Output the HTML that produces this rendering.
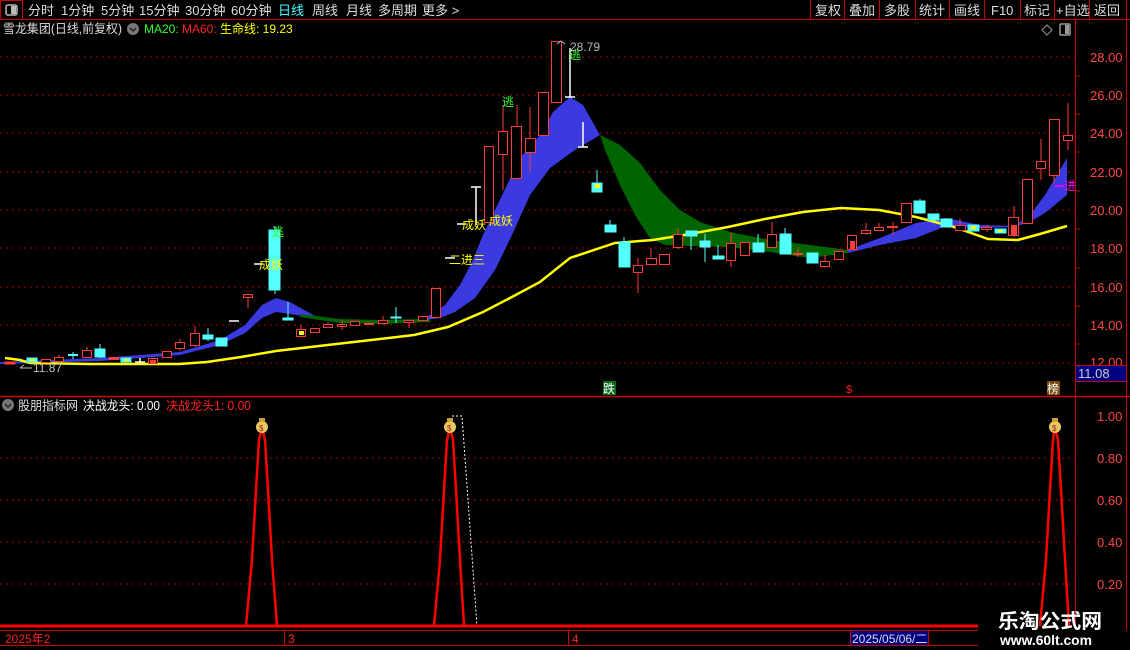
<!DOCTYPE html>
<html><head><meta charset="utf-8"><style>
body{margin:0;background:#000;width:1130px;height:650px;overflow:hidden;font-family:"Liberation Sans","Noto Sans CJK SC",sans-serif;}
svg{position:absolute;left:0;top:0}
text{font-family:"Liberation Sans","Noto Sans CJK SC",sans-serif;}
</style></head><body>
<svg width="1130" height="650" viewBox="0 0 1130 650">
<!-- top bar -->
<rect x="0.5" y="0.5" width="22" height="19" fill="none" stroke="#c00"/>
<rect x="6" y="5" width="11" height="10" rx="2" fill="none" stroke="#bbb" stroke-width="1.5"/><rect x="11" y="6" width="5" height="8" fill="#bbb"/>
<line x1="0" y1="19.5" x2="1130" y2="19.5" stroke="#c00"/>
<g font-size="13" fill="#ddd">
<text x="28" y="15">分时</text><text x="61" y="15">1分钟</text><text x="101" y="15">5分钟</text><text x="139" y="15">15分钟</text><text x="185" y="15">30分钟</text><text x="231" y="15">60分钟</text>
<text x="278" y="15" fill="#4ff">日线</text><text x="312" y="15">周线</text><text x="346" y="15">月线</text><text x="378" y="15">多周期</text><text x="422" y="15">更多 &gt;</text>
<text x="815" y="15">复权</text><text x="849" y="15">叠加</text><text x="884" y="15">多股</text><text x="919" y="15">统计</text><text x="954" y="15">画线</text><text x="991" y="15">F10</text><text x="1024" y="15">标记</text><text x="1056" y="15">+自选</text><text x="1094" y="15">返回</text>
</g>
<g stroke="#c00"><line x1="810.5" y1="0" x2="810.5" y2="19"/><line x1="844.5" y1="0" x2="844.5" y2="19"/><line x1="879.5" y1="0" x2="879.5" y2="19"/><line x1="915.5" y1="0" x2="915.5" y2="19"/><line x1="949.5" y1="0" x2="949.5" y2="19"/><line x1="984.5" y1="0" x2="984.5" y2="19"/><line x1="1020.5" y1="0" x2="1020.5" y2="19"/><line x1="1054.5" y1="0" x2="1054.5" y2="19"/><line x1="1089.5" y1="0" x2="1089.5" y2="19"/><line x1="1126.5" y1="0" x2="1126.5" y2="19"/></g>
<!-- info line -->
<text x="3" y="33" font-size="12.5" fill="#ddd" textLength="119" lengthAdjust="spacingAndGlyphs">雪龙集团(日线,前复权)</text>
<circle cx="133" cy="29" r="6" fill="#777"/><path d="M130 28 l3 3 l3 -3" stroke="#222" stroke-width="1.5" fill="none"/>
<text x="144" y="33" font-size="12" fill="#3f3">MA20:</text><text x="182" y="33" font-size="12" fill="#f22">MA60:</text><text x="220" y="33" font-size="12" fill="#ff0">生命线: 19.23</text>
<path d="M1047 25 l5 5 l-5 5 l-5 -5z" fill="none" stroke="#999"/>
<rect x="1060" y="24" width="10" height="11" rx="1" fill="none" stroke="#999" stroke-width="1.5"/><rect x="1065" y="25" width="4" height="9" fill="#999"/>
<!-- axes -->
<line x1="1075.5" y1="20" x2="1075.5" y2="630" stroke="#c00"/>
<line x1="1126.5" y1="20" x2="1126.5" y2="630" stroke="#c00"/>
<g stroke="#a00" stroke-dasharray="2,4">
<line x1="0" y1="57" x2="1075" y2="57"/><line x1="0" y1="95" x2="1075" y2="95"/><line x1="0" y1="133" x2="1075" y2="133"/><line x1="0" y1="172" x2="1075" y2="172"/><line x1="0" y1="210" x2="1075" y2="210"/><line x1="0" y1="248" x2="1075" y2="248"/><line x1="0" y1="287" x2="1075" y2="287"/><line x1="0" y1="325" x2="1075" y2="325"/><line x1="0" y1="363" x2="1075" y2="363"/>
<line x1="0" y1="458" x2="1075" y2="458"/><line x1="0" y1="500" x2="1075" y2="500"/><line x1="0" y1="542" x2="1075" y2="542"/><line x1="0" y1="584" x2="1075" y2="584"/>
</g>
<g font-size="13" fill="#f44">
<text x="1090" y="62">28.00</text><text x="1090" y="100">26.00</text><text x="1090" y="138">24.00</text><text x="1090" y="177">22.00</text><text x="1090" y="215">20.00</text><text x="1090" y="253">18.00</text><text x="1090" y="292">16.00</text><text x="1090" y="330">14.00</text><text x="1090" y="367">12.00</text>
<text x="1097" y="421">1.00</text><text x="1097" y="463">0.80</text><text x="1097" y="505">0.60</text><text x="1097" y="547">0.40</text><text x="1097" y="589">0.20</text>
</g>
<g stroke="#c00"><line x1="1076" y1="76" x2="1080" y2="76"/><line x1="1076" y1="114" x2="1080" y2="114"/><line x1="1076" y1="152" x2="1080" y2="152"/><line x1="1076" y1="191" x2="1080" y2="191"/><line x1="1076" y1="229" x2="1080" y2="229"/><line x1="1076" y1="268" x2="1080" y2="268"/><line x1="1076" y1="306" x2="1080" y2="306"/><line x1="1076" y1="344" x2="1080" y2="344"/></g>
<rect x="1075.5" y="365.5" width="51" height="16" fill="#000080" stroke="#c00"/>
<text x="1078" y="378" font-size="13" fill="#ccc">11.08</text>
<!-- bands -->
<polygon fill="#3a3ae0" points="0,362 100,358 180,352 220,340 245,325 262,305 276,298 290,302 315,316 315,318 290,314 276,312 262,318 245,333 220,345 180,355 100,361 0,364"/>
<polygon fill="#006400" points="300,314 340,319 380,320 420,319 430,318 430,322 380,324 340,323 300,317"/>
<polygon fill="#3a3ae0" points="425,318 445,305 460,285 472,262 483,235 507,185 520,158 540,135 553,112 570,97 583,105 600,135 575,150 550,168 530,195 512,235 495,270 475,298 455,312 440,318 425,320"/>
<polygon fill="#006400" points="600,135 620,145 640,163 660,190 680,210 700,222 730,232 770,240 810,245 848,250 848,253 810,258 770,252 730,247 690,246 665,245 650,238 635,215 620,185 605,150"/>
<polygon fill="#3a3ae0" points="848,250 880,238 916,223 946,218 980,225 1014,226 1030,215 1045,195 1067,158 1067,195 1045,213 1030,222 1014,227 980,228 946,226 916,238 880,245 848,253"/>
<polyline fill="none" stroke="#ff0" stroke-width="2.5" points="5,358 20,360 30,363 90,364 179,364 207,362 241,357 276,351 345,343 414,335 448,327 483,312 510,298 540,282 570,258 615,243 653,240 690,234 728,227 765,219 803,212 841,208 879,210 916,217 954,227 988,239 1018,240 1040,234 1067,226"/>
<!-- candles -->
<g stroke="#ff3c3c" fill="#000">
<rect x="5" y="362" width="10" height="2" fill="#ff3c3c"/>
<rect x="41.5" y="359.5" width="9" height="3"/>
<line x1="59" y1="355" x2="59" y2="363"/><rect x="54.5" y="357.5" width="9" height="4"/>
<line x1="87" y1="347" x2="87" y2="358"/><rect x="82.5" y="350.5" width="9" height="7"/>
<rect x="109.5" y="357.5" width="9" height="2" fill="#ff3c3c"/>
<rect x="148.5" y="358.5" width="9" height="5"/><rect x="150" y="360" width="6" height="3" fill="#ff3c3c" stroke="none"/>
<rect x="162.5" y="351.5" width="9" height="6"/>
<line x1="180" y1="339" x2="180" y2="351"/><rect x="175.5" y="342.5" width="9" height="6"/>
<line x1="195" y1="326" x2="195" y2="347"/><rect x="190.5" y="333.5" width="9" height="12"/>
<line x1="248" y1="297" x2="248" y2="308"/><rect x="243.5" y="294.5" width="9" height="3"/>
<line x1="301" y1="325" x2="301" y2="337"/><rect x="296.5" y="329.5" width="9" height="7"/><rect x="299" y="331" width="5" height="4" fill="#ff0" stroke="none"/>
<rect x="310.5" y="328.5" width="9" height="4"/>
<line x1="328" y1="322" x2="328" y2="328"/><rect x="323.5" y="324.5" width="9" height="3"/>
<line x1="342" y1="320" x2="342" y2="330"/><rect x="337.5" y="324.5" width="9" height="2"/>
<rect x="350.5" y="321.5" width="9" height="4"/>
<rect x="364.5" y="323.5" width="9" height="1"/>
<line x1="383" y1="316" x2="383" y2="325"/><rect x="378.5" y="320.5" width="9" height="3"/>
<line x1="409" y1="322" x2="409" y2="328"/><rect x="404.5" y="320.5" width="9" height="2"/>
<rect x="418.5" y="316.5" width="9" height="4"/>
<rect x="431.5" y="288.5" width="9" height="29"/>
<rect x="484.5" y="146.5" width="9" height="76"/>
<line x1="503" y1="105" x2="503" y2="190"/><rect x="498.5" y="131.5" width="9" height="23"/>
<line x1="517" y1="105" x2="517" y2="126"/><rect x="511.5" y="126.5" width="10" height="52"/>
<line x1="530" y1="107" x2="530" y2="172"/><rect x="525.5" y="138.5" width="10" height="14"/>
<rect x="538.5" y="92.5" width="10" height="43"/>
<rect x="551.5" y="41.5" width="10" height="61"/>
<line x1="638" y1="258" x2="638" y2="293"/><rect x="633.5" y="265.5" width="9" height="7"/>
<line x1="651" y1="248" x2="651" y2="258"/><rect x="646.5" y="258.5" width="10" height="6"/>
<rect x="659.5" y="254.5" width="10" height="10"/>
<line x1="678" y1="228" x2="678" y2="249"/><rect x="673.5" y="234.5" width="9" height="13"/>
<line x1="731" y1="233" x2="731" y2="267"/><rect x="726.5" y="243.5" width="9" height="17"/>
<rect x="740.5" y="242.5" width="9" height="13"/>
<line x1="772" y1="222" x2="772" y2="234"/><rect x="767.5" y="234.5" width="9" height="13"/>
<line x1="798" y1="247" x2="798" y2="257"/><line x1="793" y1="254" x2="803" y2="254" stroke-width="2"/>
<line x1="825" y1="255" x2="825" y2="268"/><rect x="820.5" y="261.5" width="9" height="5"/>
<rect x="834.5" y="251.5" width="9" height="8"/>
<rect x="847.5" y="235.5" width="9" height="14"/><rect x="850" y="241" width="5" height="8" fill="#ff3c3c" stroke="none"/>
<line x1="866" y1="223" x2="866" y2="235"/><rect x="861.5" y="230.5" width="9" height="3"/>
<line x1="879" y1="223" x2="879" y2="227"/><rect x="874.5" y="227.5" width="9" height="3"/>
<line x1="893" y1="222" x2="893" y2="235"/><line x1="887" y1="227" x2="898" y2="227" stroke-width="2"/>
<rect x="901.5" y="203.5" width="10" height="19"/>
<line x1="960" y1="219" x2="960" y2="225"/><rect x="955.5" y="225.5" width="10" height="5"/>
<line x1="987" y1="225" x2="987" y2="232"/><rect x="981.5" y="227.5" width="10" height="2"/>
<line x1="1014" y1="206" x2="1014" y2="237"/><rect x="1008.5" y="217.5" width="10" height="18"/><rect x="1011" y="225" width="6" height="10" fill="#ff3c3c" stroke="none"/>
<rect x="1022.5" y="179.5" width="10" height="44"/>
<line x1="1041" y1="139" x2="1041" y2="180"/><rect x="1036.5" y="161.5" width="9" height="7"/>
<line x1="1054" y1="175" x2="1054" y2="183"/><rect x="1049.5" y="119.5" width="10" height="56"/>
<line x1="1068" y1="103" x2="1068" y2="150"/><rect x="1063.5" y="135.5" width="9" height="5"/>
</g>
<g fill="#54ffff" stroke="#54ffff">
<rect x="27" y="358" width="10" height="4"/>
<line x1="73" y1="352" x2="73" y2="359"/><line x1="68" y1="355" x2="78" y2="355" stroke-width="2"/>
<line x1="100" y1="344" x2="100" y2="358"/><rect x="95" y="349" width="10" height="8"/>
<rect x="121" y="358" width="10" height="4"/>
<line x1="208" y1="328" x2="208" y2="341"/><rect x="203" y="335" width="10" height="4"/>
<rect x="216" y="338" width="11" height="8"/>
<line x1="275" y1="226" x2="275" y2="294"/><rect x="269" y="230" width="11" height="60"/>
<line x1="288" y1="302" x2="288" y2="320"/><rect x="283" y="318" width="10" height="2"/>
<line x1="396" y1="307" x2="396" y2="323"/><rect x="391" y="317" width="10" height="1"/>
<line x1="597" y1="170" x2="597" y2="192"/><rect x="592" y="183" width="10" height="9"/>
<line x1="610" y1="220" x2="610" y2="232"/><rect x="605" y="225" width="11" height="7"/>
<line x1="624" y1="237" x2="624" y2="267"/><rect x="619" y="242" width="11" height="25"/>
<line x1="691" y1="231" x2="691" y2="250"/><rect x="686" y="231" width="11" height="5"/>
<line x1="705" y1="234" x2="705" y2="262"/><rect x="700" y="241" width="10" height="6"/>
<line x1="718" y1="245" x2="718" y2="259"/><rect x="713" y="256" width="11" height="3"/>
<line x1="758" y1="234" x2="758" y2="252"/><rect x="753" y="243" width="11" height="9"/>
<line x1="785" y1="228" x2="785" y2="254"/><rect x="780" y="234" width="11" height="20"/>
<rect x="807" y="253" width="11" height="10"/>
<line x1="920" y1="199" x2="920" y2="213"/><rect x="914" y="201" width="11" height="12"/>
<rect x="928" y="214" width="11" height="6"/>
<rect x="941" y="219" width="11" height="8"/>
<rect x="968" y="225" width="11" height="6"/>
<rect x="995" y="229" width="11" height="4"/>
</g>
<g fill="#ff0"><rect x="30" y="359" width="5" height="2"/><rect x="124" y="359" width="5" height="2"/><rect x="595" y="184" width="5" height="4"/><rect x="971" y="226" width="5" height="3"/><rect x="998" y="230" width="5" height="2"/></g>
<g stroke="#fff" stroke-width="1.5">
<line x1="135" y1="362" x2="145" y2="362"/><line x1="140" y1="358" x2="140" y2="363"/>
<line x1="229" y1="321" x2="239" y2="321"/>
<line x1="254" y1="264" x2="263" y2="264"/>
<line x1="445" y1="258" x2="455" y2="258"/>
<line x1="457" y1="224" x2="466" y2="224"/>
<line x1="476" y1="187" x2="476" y2="225"/><line x1="471" y1="187" x2="481" y2="187"/>
<line x1="570" y1="48" x2="570" y2="97"/><line x1="565" y1="97" x2="575" y2="97"/>
<line x1="583" y1="122" x2="583" y2="147"/><line x1="578" y1="147" x2="588" y2="147"/>
</g>
<!-- labels -->
<g font-size="12">
<text x="272" y="236" fill="#3f3">逃</text>
<text x="502" y="106" fill="#3f3">逃</text>
<text x="569" y="59" fill="#3f3">逃</text>
<text x="259" y="269" fill="#ff0">成妖</text>
<text x="462" y="229" fill="#ff0">成妖</text><text x="489" y="225" fill="#ff0">成妖</text>
<text x="449" y="264" fill="#ff0">二进三</text>
<text x="570" y="51" fill="#bbb">28.79</text>
<text x="33" y="372" fill="#bbb">11.87</text>
<text x="1064" y="190" fill="#f0f">进</text>
</g>
<line x1="1055" y1="186" x2="1064" y2="186" stroke="#f0f" stroke-width="1.5"/>
<path d="M20 368 h12 M20 368 l4 -3" stroke="#bbb" fill="none"/>
<path d="M557 44 l4 -3 l4 3" stroke="#bbb" fill="none"/>
<rect x="603" y="381" width="13" height="14" fill="#0a6b1a"/><text x="603" y="393" font-size="12" fill="#fff">跌</text>
<text x="846" y="393" font-size="11" fill="#f22">$</text>
<rect x="1047" y="381" width="13" height="14" fill="#7a4a10"/><text x="1047" y="393" font-size="12" fill="#fff">榜</text>
<!-- lower panel -->
<line x1="0" y1="396.5" x2="1130" y2="396.5" stroke="#c00" stroke-width="1.5"/>
<circle cx="8" cy="405" r="6" fill="#777"/><path d="M5 404 l3 3 l3 -3" stroke="#222" stroke-width="1.5" fill="none"/>
<text x="18" y="410" font-size="12.5" fill="#ddd" textLength="60" lengthAdjust="spacingAndGlyphs">股朋指标网</text>
<text x="83" y="410" font-size="12.5" fill="#fff" textLength="77" lengthAdjust="spacingAndGlyphs">决战龙头: 0.00</text>
<text x="166" y="410" font-size="12.5" fill="#f22" textLength="85" lengthAdjust="spacingAndGlyphs">决战龙头1: 0.00</text>
<g fill="none" stroke="#f00" stroke-width="2.5">
<polyline points="246,626 252,560 256,490 259,440 261,432"/><polyline points="263,432 265,440 268,490 272,560 277,626"/>
<polyline points="434,626 440,560 444,490 447,440 449,432"/><polyline points="451,432 453,440 456,490 460,560 464,626"/>
<polyline points="1040,626 1046,560 1050,490 1053,440 1054,432"/><polyline points="1056,432 1058,440 1061,490 1065,560 1069,626"/>
</g>
<polyline points="452,416 462,416 477,626" fill="none" stroke="#fff" stroke-dasharray="2,2"/>
<g>
<circle cx="262" cy="427" r="6" fill="#e8c860"/><rect x="259" y="418" width="6" height="4" fill="#d0a030"/><text x="259" y="431" font-size="8" fill="#a02020">$</text>
<circle cx="450" cy="427" r="6" fill="#e8c860"/><rect x="447" y="418" width="6" height="4" fill="#d0a030"/><text x="447" y="431" font-size="8" fill="#a02020">$</text>
<circle cx="1055" cy="427" r="6" fill="#e8c860"/><rect x="1052" y="418" width="6" height="4" fill="#d0a030"/><text x="1052" y="431" font-size="8" fill="#a02020">$</text>
</g>
<line x1="0" y1="626" x2="978" y2="626" stroke="#f00" stroke-width="3"/>
<line x1="0" y1="630.5" x2="978" y2="630.5" stroke="#c00"/>
<line x1="0" y1="645.5" x2="978" y2="645.5" stroke="#c00"/>
<g stroke="#c00"><line x1="284.5" y1="630" x2="284.5" y2="645"/><line x1="568.5" y1="630" x2="568.5" y2="645"/></g>
<text x="5" y="643" font-size="12" fill="#f22">2025年2</text>
<text x="288" y="643" font-size="12" fill="#f22">3</text>
<text x="572" y="643" font-size="12" fill="#f22">4</text>
<rect x="850.5" y="630.5" width="78" height="15" fill="#000080" stroke="#c00"/>
<text x="852" y="643" font-size="12" fill="#ddd">2025/05/06/二</text>
<text x="998" y="628" font-size="20" font-weight="bold" fill="#fff" font-family="'Noto Sans CJK SC',sans-serif" textLength="104" lengthAdjust="spacingAndGlyphs">乐淘公式网</text>
<text x="1000" y="645" font-size="14" font-weight="bold" fill="#fff" font-family="'Liberation Serif',serif" textLength="92" lengthAdjust="spacingAndGlyphs">www.60lt.com</text>
</svg>
</body></html>
